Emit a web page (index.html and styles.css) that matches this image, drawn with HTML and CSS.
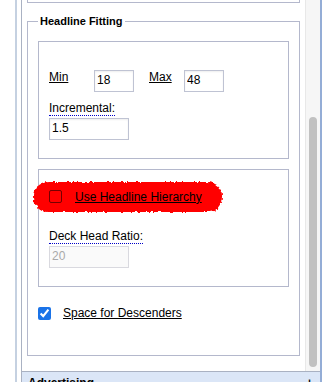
FILE: index.html
```html
<!DOCTYPE html>
<html>
<head>
<meta charset="utf-8">
<title>Headline Fitting</title>
<link rel="stylesheet" href="styles.css">
</head>
<body>
<svg class="defs" width="0" height="0" aria-hidden="true">
  <defs>
    <filter id="brush" x="-10%" y="-40%" width="120%" height="180%">
      <feTurbulence type="fractalNoise" baseFrequency="0.35" numOctaves="2" seed="4" result="noise"/>
      <feDisplacementMap in="SourceGraphic" in2="noise" scale="4" xChannelSelector="R" yChannelSelector="G" result="disp"/>
      <feGaussianBlur in="disp" stdDeviation="0.4"/>
    </filter>
  </defs>
</svg>
<div class="frame">
  <div class="panel">
    <div class="scrollarea">
      <div class="content">
        <div class="prevbox"></div>
        <fieldset class="group">
          <legend>Headline Fitting</legend>
          <div class="box">
            <div class="minmax">
              <u class="lbl lbl-min">Min</u>
              <input class="field small" value="18">
              <u class="lbl lbl-max">Max</u>
              <input class="field small" value="48">
            </div>
            <div class="flabel"><span class="help">Incremental:</span></div>
            <input class="field wide" value="1.5">
          </div>
          <div class="box box2">
            <label class="hl-row"><input type="checkbox" class="cb-plain"><u>Use Headline Hierarchy</u></label>
            <div class="flabel deck"><span class="help">Deck Head Ratio:</span></div>
            <input class="field wide" value="20" disabled>
          </div>
          <label class="check-row"><input type="checkbox" class="cb-blue" checked><u>Space for Descenders</u></label>
        </fieldset>
      </div>
      <div class="scrollbar"><div class="thumb"></div></div>
    </div>
    <div class="bar"><span>Advertising</span><span class="plus">+</span></div>
  </div>
</div>
</body>
</html>
```
FILE: styles.css
```css
html, body {
  margin: 0;
  height: 382px;
  overflow: hidden;
  background: #fff;
}
body {
  font-family: "Liberation Sans", Arial, sans-serif;
  font-size: 12px;
  color: #000;
}
.defs {
  display: block;
  width: 0;
  height: 0;
  overflow: hidden;
}
.frame {
  margin-left: 15px;
  border-left: 2px solid #c5d1e1;
  padding-left: 4px;
  height: 382px;
}
.panel {
  width: 301px;
  box-sizing: border-box;
  height: 382px;
  border-left: 1px solid #aab2c3;
  border-right: 2px solid #94add6;
  display: flex;
  flex-direction: column;
}
.scrollarea {
  display: flex;
  height: 371px;
  flex: none;
  overflow: hidden;
}
.content {
  width: 283px;
  flex: none;
  box-sizing: border-box;
  padding: 0 5px;
}
.prevbox {
  height: 2px;
  border: 1px solid #b4b8cc;
  border-top: 0;
}
.group {
  margin: 12px 0 0;
  border: 1px solid #b4b8cc;
  padding: 13px 10px 35px;
  min-width: 0;
}
.group legend {
  font-weight: bold;
  font-size: 11px;
  line-height: 13px;
  padding: 0 2px;
}
.box {
  border: 1px solid #b4b8cc;
  padding: 28px 10px 18px;
}
.box2 {
  margin-top: 10px;
  padding-top: 11px;
}
.minmax {
  display: flex;
  align-items: flex-start;
  height: 22px;
}
.lbl {
  line-height: 14px;
}
.lbl-min {
  width: 45px;
}
.lbl-max {
  margin-left: 15px;
  width: 35px;
}
.flabel {
  margin-top: 9px;
  line-height: 14px;
  height: 14px;
}
.deck {
  margin-top: 17px;
}
.help {
  border-bottom: 1px dotted #0000c8;
}
.field {
  box-sizing: border-box;
  height: 22px;
  margin: 0;
  padding: 2px 2px 4px;
  border: 1px solid #bfc3d3;
  background: #fff;
  box-shadow: inset 0 1px 2px rgba(0, 0, 0, 0.07);
  font: 12px/14px "Liberation Sans", Arial, sans-serif;
  color: #000;
  outline: none;
}
.small {
  width: 40px;
}
.wide {
  display: block;
  width: 80px;
  margin-top: 3px;
}
.field:disabled {
  color: #a9a9a9;
  border-color: #d9d9df;
  background: #fafafa;
  box-shadow: none;
}
.hl-row {
  position: relative;
  z-index: 0;
  display: flex;
  align-items: center;
  height: 31px;
  width: 189px;
  box-sizing: border-box;
  margin-left: -16px;
  padding-left: 16px;
  line-height: 14px;
}
.hl-row::before {
  content: "";
  position: absolute;
  top: 1px;
  bottom: 0;
  left: 0;
  right: 0;
  background: #ff0000;
  border-radius: 16px 15px 14px 15px / 15px 14px 16px 16px;
  filter: url(#brush);
  z-index: -1;
}
.cb-plain {
  appearance: none;
  -webkit-appearance: none;
  width: 13px;
  height: 13px;
  margin: 0 13px 0 0;
  box-sizing: border-box;
  border: 1px solid rgba(70, 0, 0, 0.75);
  border-radius: 2px;
  background: transparent;
}
.check-row {
  display: flex;
  align-items: center;
  height: 14px;
  line-height: 14px;
  margin-top: 19px;
}
.cb-blue {
  width: 13px;
  height: 13px;
  margin: 0 12px 0 0;
  accent-color: #1a73e8;
}
.scrollbar {
  width: 15px;
  flex: none;
  box-sizing: border-box;
  border-left: 1px solid #e8e8e8;
  background: #f6f6f6;
  padding: 117px 3px 0 3px;
}
.thumb {
  height: 250px;
  background: #c1c1c1;
  border-radius: 4px;
}
.bar {
  flex: 1;
  border-top: 1px solid #a9b1c2;
  background: #dbe6f7;
  display: flex;
  justify-content: space-between;
  padding: 4px 7px 0 6px;
  font-weight: bold;
  line-height: 14px;
}
```
